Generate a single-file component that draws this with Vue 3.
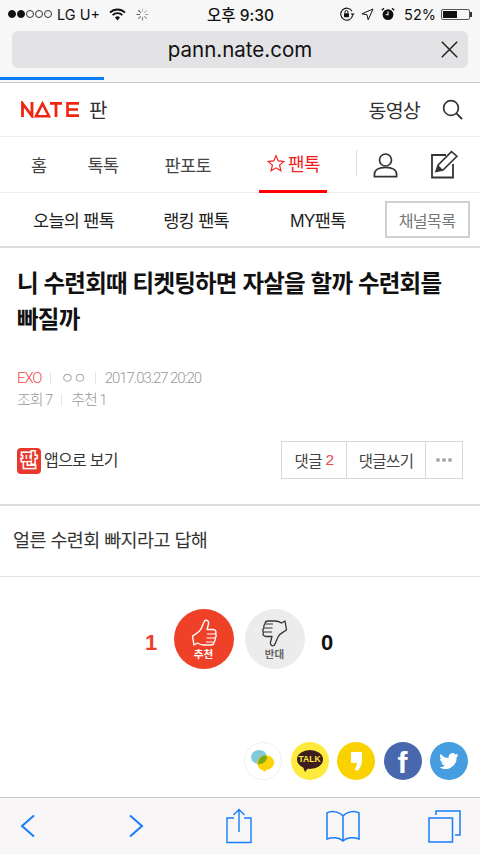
<template>
  <div class="phone">
    <header class="chrome">
      <div class="status">
        <div class="status-left">
          <span class="signal">
            <i v-for="n in 5" :key="n" :class="{ on: n < 3 }"></i>
          </span>
          <span class="carrier">LG U+</span>
          <svg class="wifi" width="17" height="13" viewBox="0 0 17 13">
            <path d="M1 4.6a10.6 10.6 0 0 1 15 0" fill="none" stroke="#111" stroke-width="1.8" />
            <path d="M3.6 7.2a7 7 0 0 1 9.8 0" fill="none" stroke="#111" stroke-width="1.8" />
            <path d="M8.5 12.4 6 9.6a3.5 3.5 0 0 1 5 0z" fill="#111" />
          </svg>
          <svg class="spinner" width="13" height="13" viewBox="0 0 13 13">
            <g stroke="#555" stroke-width="1.1" stroke-linecap="round">
              <path d="M6.5 1v2.6" opacity=".3" />
              <path d="M10.4 2.6 8.6 4.4" opacity=".4" />
              <path d="M12 6.5H9.4" opacity=".5" />
              <path d="M10.4 10.4 8.6 8.6" opacity=".6" />
              <path d="M6.5 12V9.4" opacity=".7" />
              <path d="M2.6 10.4l1.8-1.8" opacity=".8" />
              <path d="M1 6.5h2.6" />
              <path d="M2.6 2.6l1.8 1.8" />
            </g>
          </svg>
        </div>
        <span class="clock">오후 9:30</span>
        <div class="status-right">
          <svg width="16" height="14" viewBox="0 0 16 14">
            <path d="M13.6 8.6A6 6 0 1 1 13 4.2" fill="none" stroke="#111" stroke-width="1.1" />
            <path d="M11.6 6.6h4l-2 2.4z" fill="#111" />
            <rect x="5" y="6.2" width="5" height="4" rx=".6" fill="#111" />
            <path d="M6 6.4V5a1.5 1.5 0 0 1 3 0v1.4" fill="none" stroke="#111" />
          </svg>
          <svg class="loc" width="13" height="13" viewBox="0 0 13 13">
            <path d="M12 1 1 5.800l5 1 1.200 5z" fill="none" stroke="#111" />
          </svg>
          <svg class="alarm" width="14" height="14" viewBox="0 0 14 14">
            <circle cx="7" cy="7.600" r="5.400" fill="#111" />
            <path d="M7 4.400v3.400H4.800" fill="none" stroke="#fff" stroke-width="1.100" />
            <path d="M.8 3.200 3 1.200M13.200 3.200 11 1.200" stroke="#111" stroke-width="1.400" />
          </svg>
          <span class="percent">52%</span>
          <span class="battery"><i></i></span>
        </div>
      </div>
      <div class="urlbar">
        <span class="url">pann.nate.com</span>
        <svg class="url-close" width="17" height="17" viewBox="0 0 17 17">
          <path d="M.8.800l15.400 15.400M16.200.800.800 16.200" stroke="#222" stroke-width="1.500" fill="none" />
        </svg>
      </div>
      <div class="progress"></div>
    </header>

    <div class="topbar">
      <div class="brand">
        <svg class="nate" width="59" height="17" viewBox="0 0 59 17">
          <path d="M1.500 16V2.500L11 15V1" fill="none" stroke="#f0250f" stroke-width="2.800" />
          <path d="M15 15.200 21.500 2.600 28 15.200z" fill="none" stroke="#f0250f" stroke-width="2.600" />
          <path d="M29 2.400h12M35 2.400V16" fill="none" stroke="#f0250f" stroke-width="2.800" />
          <path d="M58 2.400H46.500v12.200H58M46.500 8.500H57" fill="none" stroke="#f0250f" stroke-width="2.600" />
        </svg>
        <span class="brand-name">판</span>
      </div>
      <div class="topbar-right">
        <span class="video">동영상</span>
        <svg width="21" height="21" viewBox="0 0 21 21">
          <circle cx="9" cy="9" r="7.400" fill="none" stroke="#333" stroke-width="1.700" />
          <path d="M14.400 14.400 20 20" stroke="#333" stroke-width="1.900" />
        </svg>
      </div>
    </div>

    <nav class="mainnav">
      <a class="tab home">홈</a>
      <a class="tab talk">톡톡</a>
      <a class="tab photo">판포토</a>
      <a class="tab fan">
        <svg width="18" height="18" viewBox="0 0 19 18">
          <path d="M9.500 1.200 11.900 6.800l6 .5-4.600 4 1.400 5.900-5.200-3.100-5.200 3.100 1.400-5.900-4.600-4 6-.5z" fill="none" stroke="#f01a14" stroke-width="1.200" />
        </svg>
        팬톡
      </a>
      <div class="nav-icons">
        <svg width="25" height="26" viewBox="0 0 25 26">
          <circle cx="12.500" cy="8" r="6" fill="none" stroke="#333" stroke-width="1.700" />
          <path d="M1.400 24.600v-2.200c0-4.400 4.400-7 11.100-7s11.100 2.600 11.100 7v2.200z" fill="none" stroke="#333" stroke-width="1.700" />
        </svg>
        <svg width="29" height="29" viewBox="0 0 29 29">
          <path d="M16 5H2v22.500h21V14" fill="none" stroke="#333" stroke-width="1.800" />
          <path d="M6 21.500 8.200 15 21.500 1.600l5.400 4.600L13 20z" fill="none" stroke="#333" stroke-width="1.600" />
          <path d="M6 21.500 8.200 15l4.800 5z" fill="#333" />
        </svg>
      </div>
    </nav>

    <nav class="subnav">
      <a class="sub first">오늘의 팬톡</a>
      <a class="sub second">랭킹 팬톡</a>
      <a class="sub third">MY팬톡</a>
      <a class="channel">채널목록</a>
    </nav>

    <article class="post">
      <h1 class="title">니 수련회때 티켓팅하면 자살을 할까 수련회를 빠질까</h1>
      <div class="meta">
        <span class="red">EXO</span><i class="bar"></i><span>ㅇㅇ</span><i class="bar"></i><span>2017.03.27 20:20</span>
      </div>
      <div class="meta second-line">
        <span>조회 7</span><i class="bar"></i><span>추천 1</span>
      </div>
      <div class="actions">
        <div class="app-link">
          <span class="app-icon">판</span>
          <span class="app-text">앱으로 보기</span>
        </div>
        <div class="btn-group">
          <a class="btn reply">댓글 <b>2</b></a>
          <a class="btn write">댓글쓰기</a>
          <a class="btn more"><i></i><i></i><i></i></a>
        </div>
      </div>
    </article>

    <div class="body-text">얼른 수련회 빠지라고 답해</div>

    <section class="votes">
      <span class="count red-count">1</span>
      <div class="vote up">
        <svg width="26" height="28" viewBox="0 0 26 28">
          <path d="M1.500 17C4 15 8 14 10 10c1.500-3 2-6 4-8.500 2-1 4 .5 3.500 3.500L16 10.500h6c3 0 3.500 2.500 2.500 4 1 1.500.5 3.500-.5 4.500.5 1.500 0 3-1 4 0 2-1 3-3 3h-7c-3 0-5-1-6.500-2L3 26z" fill="none" stroke="#fff" stroke-width="1.400" stroke-linejoin="round" />
          <path d="M16 15h8M15.500 19h8M15 23h7" stroke="#fff" stroke-width="1.200" />
        </svg>
        <span>추천</span>
      </div>
      <div class="vote down">
        <svg width="26" height="28" viewBox="0 0 26 28">
          <g transform="rotate(180 13 14)">
            <path d="M1.500 17C4 15 8 14 10 10c1.500-3 2-6 4-8.500 2-1 4 .5 3.500 3.500L16 10.500h6c3 0 3.500 2.500 2.500 4 1 1.500.5 3.500-.5 4.500.5 1.500 0 3-1 4 0 2-1 3-3 3h-7c-3 0-5-1-6.500-2L3 26z" fill="none" stroke="#333" stroke-width="1.300" stroke-linejoin="round" />
            <path d="M16 15h8M15.500 19h8M15 23h7" stroke="#333" stroke-width="1.100" />
          </g>
        </svg>
        <span>반대</span>
      </div>
      <span class="count">0</span>
    </section>

    <div class="spacer"></div>

    <div class="share">
      <span class="sns blog">
        <svg width="27" height="25" viewBox="0 0 30 28">
          <ellipse cx="10" cy="9" rx="9" ry="8" fill="#7fcbdc" />
          <path d="M17 7c6 0 10 4 10 8s-4 8-8 8l-2 2c-1 1-3 0-2-1-4-1-7-4-7-8 0-5 4-9 9-9z" fill="#fdd30a" />
          <path d="M17 7a9 9 0 0 1 2 2c0 4-4 8-9 8h-1c-.6-5 3-10 8-10z" fill="#7cab1a" />
        </svg>
      </span>
      <span class="sns kakao">
        <span class="talk-bubble">TALK</span>
      </span>
      <span class="sns story">
        <svg width="11" height="19" viewBox="0 0 11 19">
          <path d="M0 0h11v9c0 4-2 7-4.500 10l-3-1.500c1-1.500 2-3.500 2.500-6.500H0z" fill="#fff" />
        </svg>
      </span>
      <span class="sns fb">f</span>
      <span class="sns tw">
        <svg width="20" height="16" viewBox="0 0 26 21">
          <path d="M25.500 2.600c-1 .4-2 .7-3 .8 1-.6 1.900-1.600 2.300-2.800-1 .6-2.100 1-3.300 1.300A5.200 5.200 0 0 0 12.600 6.600C8.300 6.400 4.500 4.300 1.900 1.200.5 3.600 1.200 6.700 3.500 8.200c-.8 0-1.600-.2-2.300-.6 0 2.500 1.800 4.700 4.200 5.200-.8.200-1.600.2-2.400.1.700 2.100 2.600 3.600 4.900 3.600A10.500 10.500 0 0 1 .2 18.700 14.800 14.800 0 0 0 23 5.500c1-.7 1.900-1.700 2.500-2.900z" fill="#fff" />
        </svg>
      </span>
    </div>

    <footer class="toolbar">
      <svg class="tool-back" width="16" height="24" viewBox="0 0 16 24">
        <path d="M14 1.500 2 12l12 10.500" fill="none" stroke="#157efb" stroke-width="2" />
      </svg>
      <svg class="tool-forward" width="16" height="24" viewBox="0 0 16 24">
        <path d="M2 1.500 14 12 2 22.500" fill="none" stroke="#157efb" stroke-width="2" />
      </svg>
      <svg class="tool-share" width="26" height="36" viewBox="0 0 26 36">
        <path d="M8 10H1v24.500h24V10h-7" fill="none" stroke="#157efb" stroke-width="1.400" />
        <path d="M13 24V1.500M7.500 7 13 1.500 18.500 7" fill="none" stroke="#157efb" stroke-width="1.400" />
      </svg>
      <svg class="tool-book" width="34" height="32" viewBox="0 0 34 32">
        <path d="M17 6C14 2 6 0 1 3v26c5-2 12-2 16 2 4-4 11-4 16-2V3c-5-3-13-1-16 3zM17 6v25" fill="none" stroke="#157efb" stroke-width="1.500" />
      </svg>
      <svg class="tool-tabs" width="33" height="33" viewBox="0 0 33 33">
        <rect x="1" y="8" width="23.500" height="24" fill="none" stroke="#157efb" stroke-width="1.500" />
        <path d="M8 5V1h24v24h-5" fill="none" stroke="#157efb" stroke-width="1.500" />
      </svg>
    </footer>
  </div>
</template>

<script setup>
</script>

<style>
html,
body {
  margin: 0;
  background: #fff;
}
</style>

<style scoped>
.phone {
  width: 480px;
  height: 854px;
  overflow: hidden;
  display: flex;
  flex-direction: column;
  background: #fff;
  color: #222;
  font-family: "Liberation Sans", "Noto Sans CJK KR", sans-serif;
}

.chrome {
  height: 83px;
  box-sizing: border-box;
  flex: none;
  background: #f7f7f7;
  border-bottom: 1px solid #c9c9c9;
  display: flex;
  flex-direction: column;
}

.status {
  height: 26px;
  margin-top: 1px;
  padding: 0 7px 0 8px;
  display: grid;
  grid-template-columns: 1fr auto 1fr;
  align-items: center;
  font-family: Inter, "Noto Sans CJK KR", sans-serif;
  font-size: 14.5px;
  color: #111;
}

.status-left {
  display: flex;
  align-items: center;
}

.signal {
  display: flex;
  gap: 1px;
  margin-right: 5px;
}

.signal i {
  width: 6px;
  height: 6px;
  border: 0.8px solid #333;
  border-radius: 50%;
}

.signal i.on {
  background: #111;
  border-color: #111;
}

.wifi {
  margin-left: 9px;
}

.spinner {
  margin-left: 10px;
}

.clock {
  font-weight: 500;
  font-size: 15.5px;
}

.status-right {
  display: flex;
  align-items: center;
  justify-content: flex-end;
}

.loc {
  margin-left: 6px;
}

.alarm {
  margin-left: 7px;
}

.percent {
  margin-left: 9px;
}

.battery {
  position: relative;
  height: 11px;
  margin: 0 3px 0 5px;
  border: 1px solid #555;
  border-radius: 2px;
  padding: 1px;
  box-sizing: border-box;
  width: 29px;
}

.battery i {
  display: block;
  width: 14px;
  height: 100%;
  background: #111;
}

.battery::after {
  content: "";
  position: absolute;
  right: -3px;
  top: 2px;
  width: 2px;
  height: 5px;
  background: #333;
}

.urlbar {
  position: relative;
  height: 37px;
  margin: 4px 12px 0;
  background: #e3e3e5;
  border-radius: 6px;
  display: flex;
  align-items: center;
  justify-content: center;
}

.url {
  font-family: Inter, sans-serif;
  font-size: 20.500px;
  color: #111;
}

.url-close {
  position: absolute;
  right: 10px;
  top: 10px;
}

.progress {
  width: 104px;
  height: 3px;
  margin-top: 9px;
  background: #0a7dfb;
}

.topbar {
  height: 54px;
  flex: none;
  box-sizing: border-box;
  padding: 0 8px 0 21px;
  display: flex;
  align-items: center;
  justify-content: space-between;
  border-bottom: 1px solid #eee;
}

.brand {
  display: flex;
  align-items: center;
  gap: 9px;
}

.brand-name {
  font-size: 20px;
  color: #333;
}

.topbar-right {
  display: flex;
  align-items: center;
  gap: 22px;
  padding-right: 9px;
}

.video {
  font-size: 19.500px;
  letter-spacing: -0.8px;
  color: #333;
}

.mainnav {
  position: relative;
  height: 56px;
  flex: none;
  box-sizing: border-box;
  display: flex;
  align-items: center;
  border-bottom: 1px solid #eee;
}

.tab {
  flex: none;
  font-size: 17.500px;
  letter-spacing: -0.6px;
  color: #444;
}

.home {
  margin-left: 31px;
}

.talk {
  margin-left: 41px;
}

.photo {
  margin-left: 46px;
}

.fan {
  display: flex;
  align-items: center;
  gap: 3px;
  box-sizing: border-box;
  width: 68px;
  height: 56px;
  margin-left: 48px;
  padding-left: 8px;
  border-bottom: 3px solid #f00;
  font-size: 18px;
  letter-spacing: -0.5px;
  color: #ef1d1d;
  white-space: nowrap;
}

.nav-icons {
  flex: none;
  display: flex;
  align-items: center;
  gap: 32px;
  margin-left: 29px;
  padding-left: 17px;
  position: relative;
}

.nav-icons::before {
  content: "";
  position: absolute;
  left: 0;
  top: 0;
  height: 26px;
  width: 1px;
  background: #ddd;
}

.subnav {
  height: 55px;
  flex: none;
  box-sizing: border-box;
  display: flex;
  align-items: center;
  border-bottom: 2px solid #ddd;
}

.sub {
  flex: none;
  font-size: 17.500px;
  letter-spacing: -0.7px;
  color: #222;
}

.first {
  margin-left: 33px;
}

.second {
  margin-left: 49px;
}

.third {
  margin-left: 61px;
}

.channel {
  flex: none;
  margin-left: 39px;
  width: 85px;
  height: 37px;
  box-sizing: border-box;
  border: 2px solid #d0d0d0;
  display: flex;
  align-items: center;
  justify-content: center;
  font-size: 16px;
  letter-spacing: -0.5px;
  color: #777;
}

.post {
  flex: none;
  box-sizing: border-box;
  height: 258px;
  padding: 18px 17px 0;
  border-bottom: 2px solid #ddd;
}

.title {
  margin: 0;
  font-size: 23.500px;
  line-height: 36px;
  letter-spacing: -0.8px;
  font-weight: 700;
  color: #111;
}

.meta {
  display: flex;
  align-items: center;
  margin-top: 30px;
  font-family: Roboto, "Noto Sans CJK KR", sans-serif;
  font-weight: 300;
  font-size: 15px;
  line-height: 20px;
  letter-spacing: -1.1px;
  color: #999;
}

.second-line {
  margin-top: 2px;
}

.red {
  color: #f0474a;
}

.bar {
  width: 1px;
  height: 12px;
  margin: 0 9px;
  background: #e5e5e5;
}

.actions {
  display: flex;
  align-items: center;
  justify-content: space-between;
  margin-top: 32px;
}

.app-link {
  display: flex;
  align-items: center;
  gap: 3px;
  font-size: 16px;
  letter-spacing: -0.7px;
  color: #333;
}

.app-text {
  padding-bottom: 3px;
}

.app-icon {
  width: 24px;
  height: 26px;
  border-radius: 4px;
  background: #e8392e;
  color: #e8392e;
  font-size: 17px;
  font-weight: 700;
  line-height: 26px;
  text-align: center;
  letter-spacing: 0;
  -webkit-text-stroke: 3px #fff;
  paint-order: stroke fill;
}

.btn-group {
  display: flex;
  height: 38px;
  box-sizing: border-box;
  border: 1px solid #d8d8d8;
  margin-top: -1px;
}

.btn {
  display: flex;
  align-items: center;
  justify-content: center;
  box-sizing: border-box;
  font-size: 15.500px;
  letter-spacing: -0.6px;
  color: #444;
  white-space: pre;
}

.btn + .btn {
  border-left: 1px solid #d8d8d8;
}

.reply {
  width: 64px;
}

.reply b {
  font-weight: 400;
  color: #f0474a;
}

.write {
  width: 79px;
}

.more {
  width: 37px;
  gap: 2px;
}

.more i {
  width: 4px;
  height: 4px;
  border-radius: 50%;
  background: #aaa;
}

.body-text {
  flex: none;
  box-sizing: border-box;
  height: 71px;
  padding: 0 13px 4px;
  display: flex;
  align-items: center;
  border-bottom: 1px solid #e5e5e5;
  font-size: 18.500px;
  letter-spacing: -0.6px;
  color: #333;
}

.votes {
  flex: none;
  display: flex;
  align-items: center;
  justify-content: center;
  margin-top: 32px;
  padding-right: 2px;
  gap: 11px;
}

.count {
  font-size: 22px;
  font-weight: 700;
  color: #111;
  width: 13px;
  margin: 8px 5px 0;
  text-align: center;
}

.red-count {
  color: #ef3c2b;
}

.vote {
  width: 60px;
  height: 60px;
  border-radius: 50%;
  display: flex;
  flex-direction: column;
  align-items: center;
  justify-content: center;
  gap: 1px;
  font-size: 10.500px;
  font-weight: 700;
}

.vote span {
  line-height: 12px;
}

.up {
  background: #ef4127;
  color: #fff;
}

.down {
  background: #ececec;
  color: #666;
}

.spacer {
  flex: 1;
}

.share {
  flex: none;
  display: flex;
  justify-content: flex-end;
  gap: 8.500px;
  padding: 0 12px 0 0;
  margin-bottom: 17px;
}

.sns {
  width: 38px;
  height: 38px;
  border-radius: 50%;
  display: flex;
  align-items: center;
  justify-content: center;
  box-sizing: border-box;
}

.blog {
  border: 1px solid #efefef;
}

.kakao {
  background: #fee93d;
}

.talk-bubble {
  position: relative;
  width: 26px;
  height: 19px;
  margin-bottom: 3px;
  border-radius: 50%;
  background: #3c1e1e;
  color: #fee93d;
  font-size: 8.500px;
  font-weight: 700;
  line-height: 19px;
  text-align: center;
}

.talk-bubble::after {
  content: "";
  position: absolute;
  left: 6px;
  bottom: -3px;
  border-top: 5px solid #3c1e1e;
  border-left: 2px solid transparent;
  border-right: 4px solid transparent;
}

.story {
  background: #fad200;
}

.fb {
  background: #4768ac;
  color: #fff;
  font-size: 30px;
  font-weight: 700;
  padding-top: 4px;
  font-family: "Liberation Sans", sans-serif;
}

.tw {
  background: #469ddf;
}

.toolbar {
  height: 57px;
  flex: none;
  box-sizing: border-box;
  padding-left: 20px;
  background: #f8f6f7;
  border-top: 1px solid #c9c9c9;
  display: flex;
  align-items: center;
}

.tool-forward {
  margin-left: 92px;
}

.tool-share {
  margin-left: 82px;
}

.tool-book {
  margin-left: 74px;
}

.tool-tabs {
  margin-left: 68px;
}
</style>
